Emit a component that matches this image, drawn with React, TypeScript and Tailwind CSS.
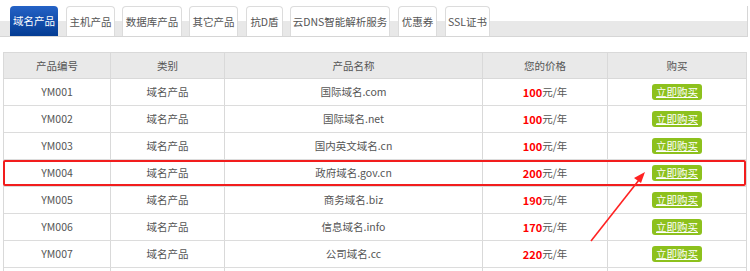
import React from "react";

const tabs = [
  { label: "域名产品", cls: "w-[48px] ml-0", active: true },
  { label: "主机产品", cls: "w-[49px] ml-[8px]" },
  { label: "数据库产品", cls: "w-[60px] ml-[7px]" },
  { label: "其它产品", cls: "w-[49px] ml-[7px]" },
  { label: "抗D盾", cls: "w-[37px] ml-[8px]" },
  { label: "云DNS智能解析服务", cls: "w-[100px] ml-[7px]" },
  { label: "优惠券", cls: "w-[39px] ml-[8px]" },
  { label: "SSL证书", cls: "w-[45px] ml-[8px]" },
];

const rows = [
  ["YM001", "国际域名.com", "100"],
  ["YM002", "国际域名.net", "100"],
  ["YM003", "国内英文域名.cn", "100"],
  ["YM004", "政府域名.gov.cn", "200"],
  ["YM005", "商务域名.biz", "190"],
  ["YM006", "信息域名.info", "170"],
  ["YM007", "公司域名.cc", "220"],
];

const grid = "grid grid-cols-[107px_114px_258px_125px_1fr]";

export default function App() {
  return (
    <div
      className="relative w-[750px] h-[271px] overflow-hidden bg-white text-[#555] text-[10.5px]"
      style={{ fontFamily: '"Noto Sans CJK SC", "Noto Sans", sans-serif' }}
    >
      <div className="pt-[6px]">
        <div className="flex w-[748px] h-[31px] pl-[10px] border-b border-[#d6d6d6] border-r bg-[linear-gradient(to_bottom,#ffffff_15px,#e8e8e8_15px)]">
          {tabs.map((t) =>
            t.active ? (
              <div
                key={t.label}
                className={`${t.cls} h-[30px] flex items-center justify-center rounded-t-[4px] text-white bg-[linear-gradient(to_bottom,#2462c6,#043c93)]`}
              >
                {t.label}
              </div>
            ) : (
              <div
                key={t.label}
                className={`${t.cls} h-[30px] flex items-center justify-center rounded-t-[4px] bg-white border border-b-0 border-[#dcdcdc] whitespace-nowrap`}
              >
                {t.label}
              </div>
            )
          )}
        </div>
      </div>

      <div className="ml-[3px] mt-[15px] w-[744px] border-l border-r border-t border-[#d9d9d9]">
        <div className={`${grid} h-[26px] bg-[#e9e9e9] border-b border-[#d9d9d9]`}>
          {["产品编号", "类别", "产品名称", "您的价格", "购买"].map((h, i) => (
            <div
              key={h}
              className={`flex items-center justify-center ${i < 4 ? "border-r border-[#d9d9d9]" : ""}`}
            >
              {h}
            </div>
          ))}
        </div>
        {rows.map(([code, name, price]) => (
          <div key={code} className={`${grid} relative h-[27px] border-b border-[#dcdcdc]`}>
            <div className="flex items-center justify-center border-r border-[#d9d9d9]">{code}</div>
            <div className="flex items-center justify-center border-r border-[#d9d9d9]">域名产品</div>
            <div className="flex items-center justify-center border-r border-[#d9d9d9]">{name}</div>
            <div className="flex items-center justify-center border-r border-[#d9d9d9]">
              <span className="text-[#f00] font-bold text-[11px]">{price}</span>
              <span>元/年</span>
            </div>
            <div className="flex items-center justify-center">
              <span className="w-[50px] h-[16px] rounded-[3px] bg-[#8dc11d] text-white underline flex items-center justify-center leading-none">
                立即购买
              </span>
            </div>
            {code === "YM004" && (
              <div className="absolute left-[-1px] right-[0px] top-[0px] bottom-[0px] border-2 border-[#f21d1d] rounded-[2px]" />
            )}
          </div>
        ))}
        <div className={`${grid} h-[27px]`}>
          <div className="border-r border-[#d9d9d9]" />
          <div className="border-r border-[#d9d9d9]" />
          <div className="border-r border-[#d9d9d9]" />
          <div className="border-r border-[#d9d9d9]" />
          <div />
        </div>
      </div>

      <svg className="absolute left-0 top-0" width="750" height="271" viewBox="0 0 750 271">
        <line x1="591" y1="241" x2="639" y2="180" stroke="#f22" strokeWidth="1.6" />
        <polygon points="645,172 634,178 641,183" fill="#f22" />
      </svg>
    </div>
  );
}
